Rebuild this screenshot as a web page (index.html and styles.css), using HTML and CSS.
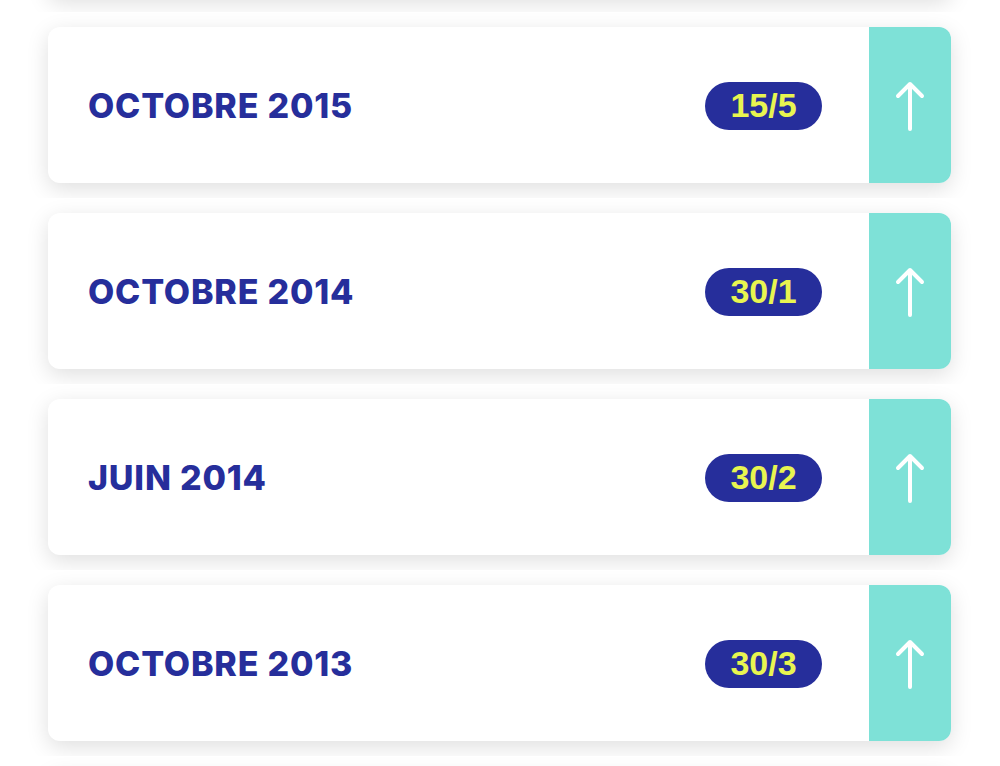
FILE: index.html
```html
<!DOCTYPE html>
<html lang="fr">
<head>
<meta charset="utf-8">
<title>Sessions</title>
<link rel="stylesheet" href="styles.css">
</head>
<body>
<div class="list">
  <div class="row row-first">
    <div class="card">
      <div class="card-main"></div>
      <div class="action"></div>
    </div>
  </div>
  <div class="row">
    <div class="card">
      <div class="card-main"><span class="title">OCTOBRE 2015</span><span class="badge">15/5</span></div>
      <div class="action"><svg class="arrow" viewBox="0 0 30 52" width="30" height="52"><path d="M15 49V4M3 16L15 4L27 16" fill="none" stroke="#fff" stroke-width="4" stroke-linecap="round" stroke-linejoin="round"/></svg></div>
    </div>
  </div>
  <div class="row">
    <div class="card">
      <div class="card-main"><span class="title">OCTOBRE 2014</span><span class="badge">30/1</span></div>
      <div class="action"><svg class="arrow" viewBox="0 0 30 52" width="30" height="52"><path d="M15 49V4M3 16L15 4L27 16" fill="none" stroke="#fff" stroke-width="4" stroke-linecap="round" stroke-linejoin="round"/></svg></div>
    </div>
  </div>
  <div class="row">
    <div class="card">
      <div class="card-main"><span class="title">JUIN 2014</span><span class="badge">30/2</span></div>
      <div class="action"><svg class="arrow" viewBox="0 0 30 52" width="30" height="52"><path d="M15 49V4M3 16L15 4L27 16" fill="none" stroke="#fff" stroke-width="4" stroke-linecap="round" stroke-linejoin="round"/></svg></div>
    </div>
  </div>
  <div class="row">
    <div class="card">
      <div class="card-main"><span class="title">OCTOBRE 2013</span><span class="badge">30/3</span></div>
      <div class="action"><svg class="arrow" viewBox="0 0 30 52" width="30" height="52"><path d="M15 49V4M3 16L15 4L27 16" fill="none" stroke="#fff" stroke-width="4" stroke-linecap="round" stroke-linejoin="round"/></svg></div>
    </div>
  </div>
  <div class="row row-last">
    <div class="card">
      <div class="card-main"></div>
      <div class="action"></div>
    </div>
  </div>
</div>
</body>
</html>
```
FILE: styles.css
```css
html, body {
  margin: 0;
  padding: 0;
  background: #ffffff;
}
body {
  height: 766px;
  overflow: hidden;
  font-family: "Inter", "Liberation Sans", sans-serif;
}
.list {
  display: flex;
  flex-direction: column;
}
.row {
  height: 186px;
  box-sizing: border-box;
  padding: 15px 49px 15px 48px;
  overflow: hidden;
  background: #ffffff;
  flex-shrink: 0;
}
.row-first {
  margin-top: -174px;
}
.row-last {
  height: 10px;
  padding-bottom: 0;
}
.card {
  height: 156px;
  display: flex;
  background: #ffffff;
  border-radius: 12px;
  overflow: hidden;
  box-shadow: 0 6px 22px rgba(0, 0, 0, 0.13);
}
.card-main {
  flex: 1;
  display: flex;
  align-items: center;
  justify-content: space-between;
  padding: 0 47px 0 40px;
}
.title {
  color: #262e9b;
  font-family: "Inter", sans-serif;
  font-weight: 800;
  font-size: 34px;
  letter-spacing: 0.8px;
}
.badge {
  width: 117px;
  height: 48px;
  border-radius: 24px;
  background: #262e9b;
  color: #e8f550;
  font-family: "Liberation Sans", Arial, sans-serif;
  font-weight: 700;
  font-size: 34px;
  display: flex;
  align-items: center;
  justify-content: center;
  margin-top: 1px;
}
.action {
  width: 82px;
  background: #7ee1d7;
  display: flex;
  align-items: center;
  justify-content: center;
}
.arrow {
  display: block;
  margin-top: 2px;
}
```
